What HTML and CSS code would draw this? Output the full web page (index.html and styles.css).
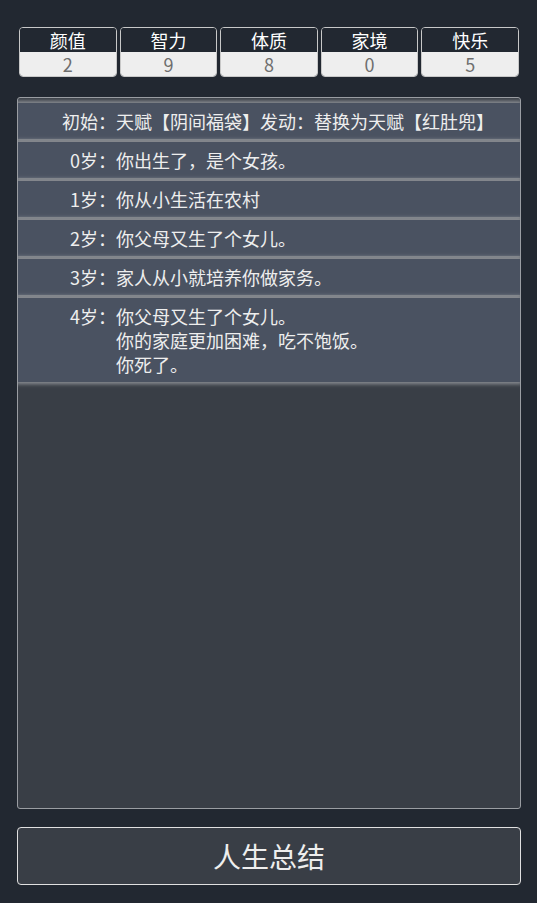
FILE: index.html
```html
<!DOCTYPE html>
<html lang="zh-CN">
<head>
    <meta charset="UTF-8">
    <meta name="viewport" content="width=device-width, initial-scale=1.0">
    <title>人生重开模拟器</title>
    <link rel="stylesheet" href="styles.css">
</head>
<body>

<div class="app">
    <ul class="props">
        <li><span class="prop-name">颜值</span><span class="prop-value">2</span></li>
        <li><span class="prop-name">智力</span><span class="prop-value">9</span></li>
        <li><span class="prop-name">体质</span><span class="prop-value">8</span></li>
        <li><span class="prop-name">家境</span><span class="prop-value">0</span></li>
        <li><span class="prop-name">快乐</span><span class="prop-value">5</span></li>
    </ul>

    <ul class="trajectory">
        <li><span class="age">初始：</span><span class="event">天赋【阴间福袋】发动：替换为天赋【红肚兜】</span></li>
        <li><span class="age">0岁：</span><span class="event">你出生了，是个女孩。</span></li>
        <li><span class="age">1岁：</span><span class="event">你从小生活在农村</span></li>
        <li><span class="age">2岁：</span><span class="event">你父母又生了个女儿。</span></li>
        <li><span class="age">3岁：</span><span class="event">家人从小就培养你做家务。</span></li>
        <li><span class="age">4岁：</span><span class="event">你父母又生了个女儿。<br>你的家庭更加困难，吃不饱饭。<br>你死了。</span></li>
    </ul>

    <button class="summary">人生总结</button>
</div>

</body>
</html>
```

FILE: styles.css
```css
* {
    box-sizing: border-box;
}
body {
    margin: 0;
    background-color: #222831;
    color: #eeeeee;
    font-family: "Noto Sans CJK SC", "Noto Sans", sans-serif;
}
.app {
    height: 100vh;
    display: flex;
    flex-direction: column;
    padding: 27px 16px 18px 17px;
}
ul {
    list-style: none;
    margin: 0;
    padding: 0;
}

/* 属性栏 */
.props {
    display: flex;
    gap: 3px;
    padding: 0 2px;
}
.props li {
    flex: 1;
    display: flex;
    flex-direction: column;
    border: 1px solid #c8c8c8;
    border-radius: 4px;
    overflow: hidden;
    text-align: center;
}
.prop-name {
    height: 24px;
    line-height: 24px;
    font-size: 18px;
    color: #ffffff;
    background-color: #222831;
}
.prop-value {
    height: 24px;
    line-height: 24px;
    font-size: 18px;
    color: #6e6e6e;
    background-color: #eeeeee;
}

/* 人生轨迹 */
.trajectory {
    flex: 1;
    margin: 20px 0 18px;
    padding: 5px 0;
    background-color: #393e46;
    border: 1px solid #9a9da2;
    border-radius: 3px;
    overflow-y: auto;
}
.trajectory li {
    display: flex;
    padding: 6px 0;
    margin-bottom: 3px;
    line-height: 24px;
    font-size: 18px;
    background-color: #4a5261;
    box-shadow: 0 0 4px 2px rgba(150, 153, 158, 0.9);
}
.age {
    flex: none;
    width: 98px;
    text-align: right;
}
.event {
    flex: 1;
}

.summary {
    height: 58px;
    flex: none;
    background-color: #393e46;
    border: 1px solid #e0e0e0;
    border-radius: 4px;
    color: #eeeeee;
    font-family: inherit;
    font-size: 28px;
    cursor: pointer;
}
```
